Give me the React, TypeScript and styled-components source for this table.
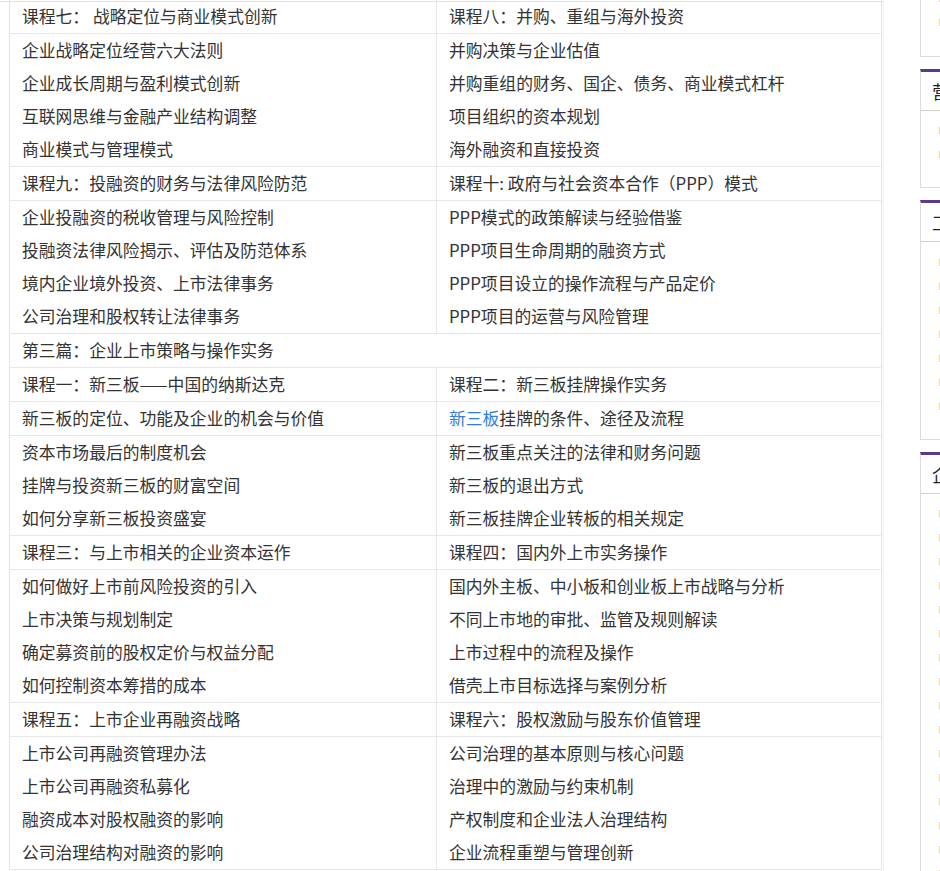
import React from "react";
import styled, { createGlobalStyle } from "styled-components";

const GlobalStyle = createGlobalStyle`
  html, body {
    margin: 0;
    padding: 0;
    background: #ffffff;
    overflow: hidden;
  }
  body {
    font-family: "Noto Sans CJK SC", "Noto Sans", sans-serif;
    color: #333333;
  }
`;

const Page = styled.div`
  display: flex;
  align-items: flex-start;
  width: 1200px;
`;

const Main = styled.div`
  width: 873px;
  flex-shrink: 0;
  margin-top: 1px;
  padding-left: 9px;
  padding-right: 1px;
  border-top: 1px solid #e2e2e2;
  border-right: 1px solid #efefef;
`;

const Table = styled.div`
  border-left: 1px solid #e4e4e4;
  border-right: 1px solid #e4e4e4;
`;

const Row = styled.div<{ $first?: boolean }>`
  display: grid;
  grid-template-columns: 427px 1fr;
  border-bottom: 1px solid #e8e8e8;
  margin-top: ${(p) => (p.$first ? "-2px" : "0")};
`;

const Cell = styled.div<{ $full?: boolean }>`
  grid-column: ${(p) => (p.$full ? "1 / span 2" : "auto")};
  border-right: ${(p) => (p.$full ? "none" : "1px solid #e8e8e8")};
  padding: 0 12px;
  &:last-child {
    border-right: none;
  }
`;

const Line = styled.div`
  height: 33px;
  line-height: 33px;
  font-size: 16.8px;
  white-space: nowrap;
  overflow: hidden;
`;

const Link = styled.span`
  color: #2f7de1;
`;

const Sidebar = styled.aside`
  width: 260px;
  flex-shrink: 0;
  margin-left: 36px;
  margin-top: -23px;
  display: flex;
  flex-direction: column;
  gap: 12px;
`;

const Box = styled.section<{ $accent?: boolean }>`
  border: 1px solid #dcdcdc;
  border-top: ${(p) => (p.$accent ? "3px solid #5b3a87" : "1px solid #dcdcdc")};
  background: #fff;
`;

const BoxHead = styled.h3`
  margin: 0;
  height: 38px;
  line-height: 38px;
  padding-left: 11px;
  font-size: 18px;
  font-weight: normal;
  color: #222;
  border-bottom: 1px solid #cfcfcf;
  white-space: nowrap;
  overflow: hidden;
`;

const List = styled.ul<{ $top: number; $bottom: number }>`
  list-style: none;
  margin: 0;
  padding: ${(p) => p.$top}px 0 ${(p) => p.$bottom}px 18px;
`;

const Item = styled.li`
  height: 24px;
  display: flex;
  align-items: center;
  gap: 6px;
  font-size: 14px;
  color: #333;
  white-space: nowrap;
`;

const Bullet = styled.span`
  display: inline-block;
  width: 6px;
  height: 7px;
  background: #ecd98c;
  flex-shrink: 0;
`;

type Pair = [React.ReactNode, React.ReactNode];

interface Section {
  head?: Pair;
  full?: string;
  lines?: Pair[];
}

const sections: Section[] = [
  { head: ["课程七： 战略定位与商业模式创新", "课程八：并购、重组与海外投资"] },
  {
    lines: [
      ["企业战略定位经营六大法则", "并购决策与企业估值"],
      ["企业成长周期与盈利模式创新", "并购重组的财务、国企、债务、商业模式杠杆"],
      ["互联网思维与金融产业结构调整", "项目组织的资本规划"],
      ["商业模式与管理模式", "海外融资和直接投资"],
    ],
  },
  { head: ["课程九：投融资的财务与法律风险防范", "课程十: 政府与社会资本合作（PPP）模式"] },
  {
    lines: [
      ["企业投融资的税收管理与风险控制", "PPP模式的政策解读与经验借鉴"],
      ["投融资法律风险揭示、评估及防范体系", "PPP项目生命周期的融资方式"],
      ["境内企业境外投资、上市法律事务", "PPP项目设立的操作流程与产品定价"],
      ["公司治理和股权转让法律事务", "PPP项目的运营与风险管理"],
    ],
  },
  { full: "第三篇：企业上市策略与操作实务" },
  { head: ["课程一：新三板——中国的纳斯达克", "课程二：新三板挂牌操作实务"] },
  {
    lines: [
      [
        "新三板的定位、功能及企业的机会与价值",
        <>
          <Link>新三板</Link>挂牌的条件、途径及流程
        </>,
      ],
    ],
  },
  {
    lines: [
      ["资本市场最后的制度机会", "新三板重点关注的法律和财务问题"],
      ["挂牌与投资新三板的财富空间", "新三板的退出方式"],
      ["如何分享新三板投资盛宴", "新三板挂牌企业转板的相关规定"],
    ],
  },
  { head: ["课程三：与上市相关的企业资本运作", "课程四：国内外上市实务操作"] },
  {
    lines: [
      ["如何做好上市前风险投资的引入", "国内外主板、中小板和创业板上市战略与分析"],
      ["上市决策与规划制定", "不同上市地的审批、监管及规则解读"],
      ["确定募资前的股权定价与权益分配", "上市过程中的流程及操作"],
      ["如何控制资本筹措的成本", "借壳上市目标选择与案例分析"],
    ],
  },
  { head: ["课程五：上市企业再融资战略", "课程六：股权激励与股东价值管理"] },
  {
    lines: [
      ["上市公司再融资管理办法", "公司治理的基本原则与核心问题"],
      ["上市公司再融资私募化", "治理中的激励与约束机制"],
      ["融资成本对股权融资的影响", "产权制度和企业法人治理结构"],
      ["公司治理结构对融资的影响", "企业流程重塑与管理创新"],
    ],
  },
];

const sideBoxes = [
  { head: "", items: ["推荐课程", "热门课程"], top: 8, bottom: 22 },
  { head: "营销管理", items: ["营销策略与渠道管理", "大客户销售技巧"], top: 7, bottom: 21 },
  {
    head: "工商管理",
    items: ["总裁工商管理", "企业战略管理", "人力资源管理", "财务管理", "生产运营管理", "领导力提升", "企业文化建设"],
    top: 8,
    bottom: 21,
  },
  {
    head: "企业管理",
    items: [
      "企业管理培训", "股权激励", "资本运作", "上市实务", "并购重组", "投融资管理",
      "私募股权", "风险控制", "公司治理", "商业模式", "战略规划", "团队建设",
      "执行力", "绩效管理", "薪酬设计", "流程管理",
    ],
    top: 7,
    bottom: 21,
  },
];

export default function App() {
  return (
    <>
      <GlobalStyle />
      <Page>
        <Main>
          <Table>
            {sections.map((s, i) => {
              if (s.full) {
                return (
                  <Row key={i}>
                    <Cell $full>
                      <Line>{s.full}</Line>
                    </Cell>
                  </Row>
                );
              }
              const pairs: Pair[] = s.head ? [s.head] : s.lines || [];
              return (
                <Row key={i} $first={i === 0}>
                  <Cell>
                    {pairs.map((p, j) => (
                      <Line key={j}>{p[0]}</Line>
                    ))}
                  </Cell>
                  <Cell>
                    {pairs.map((p, j) => (
                      <Line key={j}>{p[1]}</Line>
                    ))}
                  </Cell>
                </Row>
              );
            })}
          </Table>
        </Main>
        <Sidebar>
          {sideBoxes.map((b, i) => (
            <Box key={i} $accent={i > 0}>
              {b.head && <BoxHead>{b.head}</BoxHead>}
              <List $top={b.top} $bottom={b.bottom}>
                {b.items.map((t) => (
                  <Item key={t}>
                    <Bullet />
                    {t}
                  </Item>
                ))}
              </List>
            </Box>
          ))}
        </Sidebar>
      </Page>
    </>
  );
}
